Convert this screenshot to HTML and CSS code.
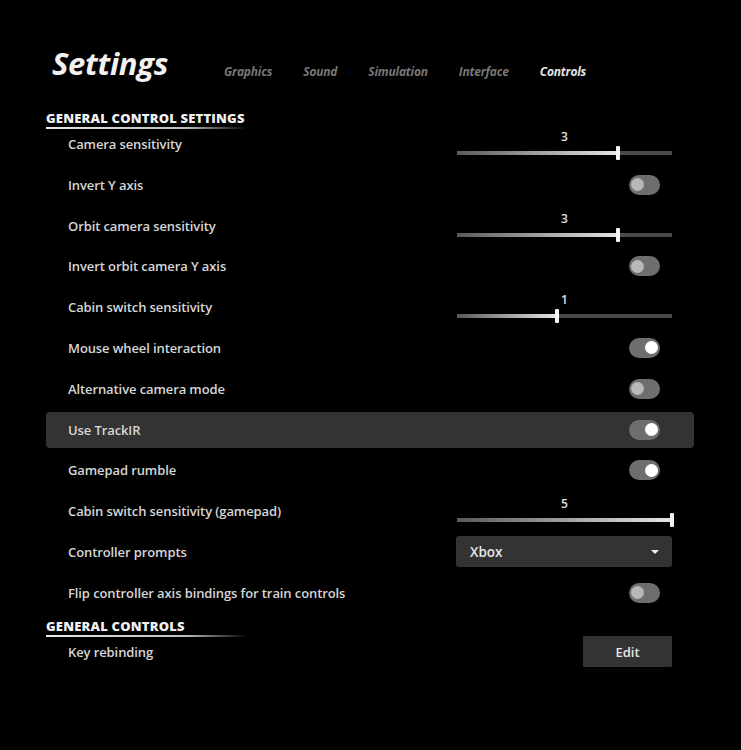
FILE: index.html
```html
<!DOCTYPE html>
<html lang="en">
<head>
    <meta charset="UTF-8">
    <meta name="viewport" content="width=device-width, initial-scale=1.0">
    <title>Settings</title>
    <link rel="stylesheet" href="styles.css">
</head>
<body>
    <div class="page">
        <div class="header">
            <h1 class="title">Settings</h1>
            <nav class="tabs">
                <span class="tab">Graphics</span>
                <span class="tab">Sound</span>
                <span class="tab">Simulation</span>
                <span class="tab">Interface</span>
                <span class="tab active">Controls</span>
            </nav>
        </div>

        <h2 class="section">General control settings</h2>
        <div class="rows">
            <div class="row">
                <span class="label">Camera sensitivity</span>
                <div class="control">
                    <div class="slider">
                        <span class="value">3</span>
                        <div class="track"><div class="fill" style="width: 75%"></div></div>
                    </div>
                </div>
            </div>
            <div class="row">
                <span class="label">Invert Y axis</span>
                <div class="control"><span class="toggle"></span></div>
            </div>
            <div class="row">
                <span class="label">Orbit camera sensitivity</span>
                <div class="control">
                    <div class="slider">
                        <span class="value">3</span>
                        <div class="track"><div class="fill" style="width: 75%"></div></div>
                    </div>
                </div>
            </div>
            <div class="row">
                <span class="label">Invert orbit camera Y axis</span>
                <div class="control"><span class="toggle"></span></div>
            </div>
            <div class="row">
                <span class="label">Cabin switch sensitivity</span>
                <div class="control">
                    <div class="slider">
                        <span class="value">1</span>
                        <div class="track"><div class="fill" style="width: 46.5%"></div></div>
                    </div>
                </div>
            </div>
            <div class="row">
                <span class="label">Mouse wheel interaction</span>
                <div class="control"><span class="toggle on"></span></div>
            </div>
            <div class="row">
                <span class="label">Alternative camera mode</span>
                <div class="control"><span class="toggle"></span></div>
            </div>
            <div class="row selected">
                <span class="label">Use TrackIR</span>
                <div class="control"><span class="toggle on"></span></div>
            </div>
            <div class="row">
                <span class="label">Gamepad rumble</span>
                <div class="control"><span class="toggle on"></span></div>
            </div>
            <div class="row">
                <span class="label">Cabin switch sensitivity (gamepad)</span>
                <div class="control">
                    <div class="slider">
                        <span class="value">5</span>
                        <div class="track"><div class="fill" style="width: 100%"></div></div>
                    </div>
                </div>
            </div>
            <div class="row">
                <span class="label">Controller prompts</span>
                <div class="control">
                    <div class="dropdown">
                        <span>Xbox</span>
                        <span class="caret"></span>
                    </div>
                </div>
            </div>
            <div class="row">
                <span class="label">Flip controller axis bindings for train controls</span>
                <div class="control"><span class="toggle"></span></div>
            </div>
        </div>

        <h2 class="section section-second">General controls</h2>
        <div class="rows">
            <div class="row">
                <span class="label">Key rebinding</span>
                <div class="control">
                    <button class="edit-btn">Edit</button>
                </div>
            </div>
        </div>
    </div>
</body>
</html>
```

FILE: styles.css
```css
html, body {
    margin: 0;
    background: #000;
}

body {
    font-family: "Open Sans", "DejaVu Sans", sans-serif;
    color: #d8d8d8;
    width: 741px;
    height: 750px;
    overflow: hidden;
}

.page {
    padding: 40px 47px 0 46px;
}

.header {
    display: flex;
    align-items: flex-start;
    padding-left: 6px;
    height: 71px;
}

.title {
    margin: 0;
    font-size: 31px;
    line-height: 46px;
    font-weight: 700;
    font-style: italic;
    color: #f2f2f2;
    letter-spacing: -0.3px;
    width: 172px;
}

.tabs {
    display: flex;
    gap: 31px;
    padding-top: 23px;
}

.tab {
    font-size: 12px;
    line-height: 17px;
    font-weight: 700;
    font-style: italic;
    color: #777;
    letter-spacing: -0.2px;
}

.tab.active {
    color: #e4e4e4;
}

.section {
    margin: 0 0 -3px;
    font-size: 13px;
    font-weight: 800;
    text-transform: uppercase;
    color: #f0f0f0;
    letter-spacing: 0.2px;
    line-height: 14px;
    width: 200px;
    padding-bottom: 2px;
    border-bottom: 2px solid transparent;
    border-image: linear-gradient(to right, #e8e8e8 0%, #bdbdbd 70%, rgba(80, 80, 80, 0) 100%) 1;
}

.section-second {
    margin-top: 8px;
}

.rows {
    display: flex;
    flex-direction: column;
    gap: 4.8px;
}

.row {
    display: flex;
    align-items: center;
    justify-content: space-between;
    height: 36px;
    padding: 0 22px;
    border-radius: 4px;
}

.row.selected {
    background: #333;
}

.label {
    font-size: 13px;
    font-weight: 600;
    color: #d6d6d6;
    letter-spacing: -0.1px;
}

.control {
    width: 216px;
    display: flex;
    justify-content: flex-end;
    align-items: center;
    height: 36px;
}

/* slider */
.slider {
    width: 215px;
    height: 36px;
    display: flex;
    flex-direction: column;
    align-items: center;
    padding-top: 5px;
    box-sizing: border-box;
}

.value {
    font-size: 12px;
    font-weight: 600;
    line-height: 12px;
    color: #e0e0e0;
}

.track {
    position: relative;
    width: 100%;
    height: 4px;
    margin-top: 8px;
    background: #4a4a4a;
}

.fill {
    position: relative;
    height: 100%;
    background: linear-gradient(to right, #5a5a5a, #e6e6e6);
}

.fill::after {
    content: "";
    position: absolute;
    right: -2px;
    top: -5px;
    width: 4px;
    height: 14px;
    border-radius: 1px;
    background: #f4f4f4;
}

/* toggle */
.toggle {
    position: relative;
    width: 31px;
    height: 20px;
    border-radius: 10px;
    background: #6e6e6e;
    margin-right: 12px;
}

.toggle::after {
    content: "";
    position: absolute;
    left: 2px;
    top: 3.5px;
    width: 13px;
    height: 13px;
    border-radius: 50%;
    background: #b8b8b8;
}

.toggle.on::after {
    left: auto;
    right: 2px;
    background: #fff;
}

/* dropdown */
.dropdown {
    width: 216px;
    height: 31px;
    box-sizing: border-box;
    display: flex;
    align-items: center;
    justify-content: space-between;
    padding: 0 13px 0 14px;
    background: #333;
    border-radius: 3px;
    font-size: 13.5px;
    font-weight: 600;
    color: #e6e6e6;
}

.caret {
    width: 0;
    height: 0;
    border-left: 4px solid transparent;
    border-right: 4px solid transparent;
    border-top: 4px solid #f0f0f0;
}

/* edit button */
.edit-btn {
    width: 89px;
    height: 31px;
    border: none;
    border-radius: 1px;
    background: #333;
    color: #e6e6e6;
    font-family: inherit;
    font-size: 13px;
    font-weight: 600;
    padding: 0;
}
```
